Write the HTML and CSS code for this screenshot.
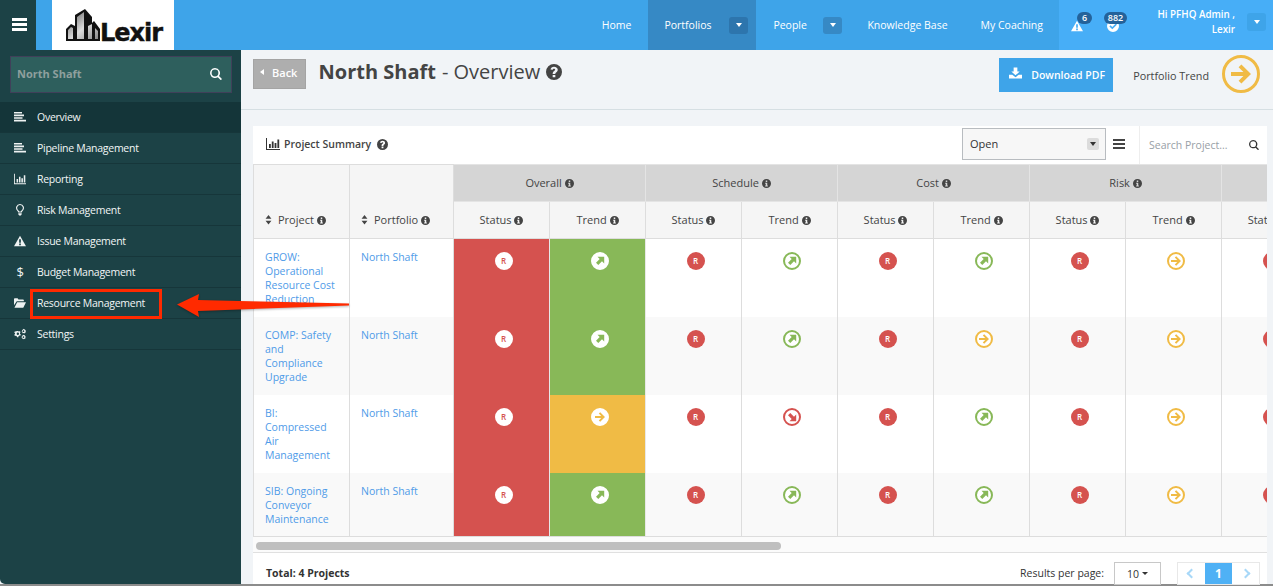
FILE: index.html
```html
<!DOCTYPE html>
<html lang="en">
<head>
<meta charset="utf-8">
<title>North Shaft - Overview</title>
<link rel="stylesheet" href="styles.css">
</head>
<body>
<svg class="defs" width="0" height="0" aria-hidden="true">
  <symbol id="i-info" viewBox="0 0 12 12"><path fill-rule="evenodd" d="M6 0a6 6 0 1 1 0 12A6 6 0 0 1 6 0zM5 2v2h2V2zM4.2 5v1.2H5v2.6h-.8V10h3.6V8.8H7V5z"/></symbol>
  <symbol id="i-q" viewBox="0 0 12 12"><path fill-rule="evenodd" d="M6 0a6 6 0 1 1 0 12A6 6 0 0 1 6 0zM5 8.300v1.700h2V8.300zM6 2C4.600 2 3.600 2.800 3.400 4.100l1.600.3c.1-.6.4-.9 1-.9.5 0 .9.3.9.7 0 .4-.3.6-.8 1C5.400 5.700 5 6.200 5 7.500h2c0-.7.200-1 .8-1.400.7-.5 1-1.100 1-1.800C8.800 3 7.600 2 6 2z"/></symbol>
  <symbol id="i-check" viewBox="0 0 12 12"><path fill-rule="evenodd" d="M6 0a6 6 0 1 1 0 12A6 6 0 0 1 6 0zM8.800 3.600L5.300 7.100 3.500 5.300 2.400 6.400l2.900 2.900 4.600-4.600z"/></symbol>
  <symbol id="i-ne" viewBox="0 0 12 12"><path d="M3.500 1.800h6.700v6.700L8 6.300l-3.700 3.700-2.300-2.300L5.700 4z"/></symbol>
  <symbol id="i-e" viewBox="0 0 12 12"><path d="M6.200 1.200L11 6l-4.800 4.800-1.400-1.400 2.400-2.400H1V5h6.200L4.800 2.600z"/></symbol>
  <symbol id="i-se" viewBox="0 0 12 12"><path d="M3.500 10.200h6.700V3.500L8 5.700 4.300 2 2 4.300 5.700 8z"/></symbol>
  <symbol id="i-lines" viewBox="0 0 12 12"><path d="M0 1h8v1.600H0zM0 3.600h10v1.600H0zM0 6.200h8.500v1.600H0zM0 8.800h12v1.600H0z"/></symbol>
  <symbol id="i-bars" viewBox="0 0 14 12"><path d="M0 0h1v11h13v1H0zM3 6h1.800v4H3zM5.800 3.500h1.800V10H5.800zM8.600 5h1.800v5H8.600zM11.400 1.500h1.800V10h-1.800z"/></symbol>
  <symbol id="i-bulb" viewBox="0 0 10 14"><path fill-rule="evenodd" d="M5 0a4.600 4.600 0 0 1 3 8.100c-.6.600-.8 1.100-.9 1.900H2.900c-.1-.8-.3-1.300-.9-1.900A4.600 4.600 0 0 1 5 0zm0 1.300A3.300 3.300 0 0 0 3 7.200c.6.600 1 1.100 1.100 1.600h1.800c.1-.5.500-1 1.100-1.600A3.300 3.300 0 0 0 5 1.300zM3 10.700h4V12l-1 1.500H4L3 12z"/></symbol>
  <symbol id="i-warn" viewBox="0 0 14 12"><path fill-rule="evenodd" d="M7 0l7 12H0zM6 4v4h2V4zM6 9v2h2V9z"/></symbol>
  <symbol id="i-folder" viewBox="0 0 14 11"><path d="M0 1.200C0 .5.500 0 1.200 0h3l1 1.300h5.300c.6 0 1 .4 1 1V3.500H3.200L0 8zM3.700 4.500H14L10.800 11H.5z"/></symbol>
  <symbol id="i-gears" viewBox="0 0 14 12"><path fill-rule="evenodd" d="M4.500 2.500l1.400.5 1-.4.700 1.400-.7.800.2 1.200.9.600-.7 1.500-1.100-.3-1 .8-.1 1.100H3.500l-.3-1.100-1-.6-1.100.4L.3 6.800l.9-.8V5L.3 4.200l.8-1.400 1.100.3 1-.6zM4.500 4.300a1.400 1.400 0 1 0 0 2.800 1.400 1.400 0 0 0 0-2.800zM11 0l.8.700 1-.1.300 1 .9.600-.4 1 .1 1-1 .4-.7.800-.9-.5-1 .1-.4-1-.8-.7.500-.9-.1-1 1-.3zM11 1.700a1 1 0 1 0 0 2 1 1 0 0 0 0-2zM11 7l.8.600 1 0 .2 1 .8.700-.5.900 0 1-1 .2-.7.700-.9-.5-1 0-.2-1-.8-.7.500-.9 0-1 1-.2zM11 8.600a1 1 0 1 0 0 2 1 1 0 0 0 0-2z"/></symbol>
  <symbol id="i-search" viewBox="0 0 12 12"><path fill-rule="evenodd" d="M5 0a5 5 0 0 1 4 8l3 3-1.200 1.200-3-3A5 5 0 1 1 5 0zm0 1.600a3.400 3.400 0 1 0 0 6.800 3.400 3.400 0 0 0 0-6.800z"/></symbol>
  <symbol id="i-sort" viewBox="0 0 8 12"><path d="M4 0l3.500 4.500h-7zM.5 7h7L4 11.500z"/></symbol>
  <symbol id="i-download" viewBox="0 0 14 12"><path d="M5 0h4v4.500h2.500L7 8.500 2.500 4.500H5zM0 8h3.500L7 10.500 10.500 8H14v4H0z"/></symbol>
</svg>

<header class="topbar">
  <button class="burger" type="button" aria-label="Menu"><span></span><span></span><span></span></button>
  <div class="logo">
    <svg class="logo-mark" viewBox="0 0 34 32" aria-hidden="true">
      <defs>
        <linearGradient id="logo-a" x1="0" y1="0" x2="1" y2="1"><stop offset="0" stop-color="#555"/><stop offset=".55" stop-color="#ddd"/><stop offset="1" stop-color="#888"/></linearGradient>
      </defs>
      <path fill="#111" d="M0 32V20l5-5 4 2V6L19 0l7 8v6l2-2 6 8v12z"/>
      <path fill="url(#logo-a)" d="M11 8l7-5v27h-7zM2 21l3-3 2 1v11H2zM22 17l4-2v15h-4zM29 19l3 3v8h-3z"/>
      <path fill="#111" d="M8 20h2v12H8zM20 14h2v18h-2z"/>
    </svg>
    <span class="logo-text">Lexir</span>
  </div>
  <nav class="nav">
    <a class="nav-item">Home</a>
    <a class="nav-item is-active">Portfolios<span class="caret-btn"><i class="caret"></i></span></a>
    <a class="nav-item">People<span class="caret-btn"><i class="caret"></i></span></a>
    <a class="nav-item">Knowledge Base</a>
    <a class="nav-item">My Coaching</a>
  </nav>
  <div class="account">
    <span class="alert alert-one"><svg class="alert-icon"><use href="#i-warn"/></svg><b class="badge">6</b></span>
    <span class="alert alert-two"><svg class="alert-icon"><use href="#i-check"/></svg><b class="badge">882</b></span>
    <span class="hello">Hi PFHQ Admin ,<br>Lexir</span>
    <span class="caret-btn user-caret"><i class="caret"></i></span>
  </div>
</header>

<div class="shell">
  <aside class="sidebar">
    <div class="side-search">
      <div class="side-box"><span>North Shaft</span><svg class="side-search-icon"><use href="#i-search"/></svg></div>
    </div>
    <ul class="side-menu">
      <li class="is-current"><svg class="si"><use href="#i-lines"/></svg>Overview</li>
      <li><svg class="si"><use href="#i-lines"/></svg>Pipeline Management</li>
      <li><svg class="si"><use href="#i-bars"/></svg>Reporting</li>
      <li><svg class="si"><use href="#i-bulb"/></svg>Risk Management</li>
      <li><svg class="si"><use href="#i-warn"/></svg>Issue Management</li>
      <li><span class="si dollar">$</span>Budget Management</li>
      <li><svg class="si"><use href="#i-folder"/></svg>Resource Management</li>
      <li><svg class="si"><use href="#i-gears"/></svg>Settings</li>
    </ul>
  </aside>

  <main class="content">
    <div class="page-head">
      <a class="back"><i class="back-caret"></i>Back</a>
      <h1 class="title"><b>North Shaft</b> - Overview <svg class="title-q"><use href="#i-q"/></svg></h1>
      <a class="download"><svg class="dl-icon"><use href="#i-download"/></svg>Download PDF</a>
      <span class="trend-label">Portfolio Trend</span>
      <span class="trend-big"><svg><use href="#i-e"/></svg></span>
    </div>

    <section class="card">
      <div class="card-head">
        <svg class="ch-bars"><use href="#i-bars"/></svg>
        <span class="ch-title">Project Summary</span>
        <svg class="ch-q"><use href="#i-q"/></svg>
        <div class="select"><span>Open</span><i class="select-btn"><i class="caret dark"></i></i></div>
        <div class="menu-lines"><span></span><span></span><span></span></div>
        <div class="card-search"><span>Search Project...</span><svg><use href="#i-search"/></svg></div>
      </div>

      <div class="table-clip">
        <table class="grid">
          <colgroup><col class="c-project"><col class="c-portfolio"><col span="10" class="c-n"></colgroup>
          <thead>
            <tr class="r-group">
              <th rowspan="2" class="th-left"><svg class="sort"><use href="#i-sort"/></svg>Project <svg class="inf"><use href="#i-info"/></svg></th>
              <th rowspan="2" class="th-left"><svg class="sort"><use href="#i-sort"/></svg>Portfolio <svg class="inf"><use href="#i-info"/></svg></th>
              <th colspan="2" class="grp">Overall <svg class="inf"><use href="#i-info"/></svg></th>
              <th colspan="2" class="grp">Schedule <svg class="inf"><use href="#i-info"/></svg></th>
              <th colspan="2" class="grp">Cost <svg class="inf"><use href="#i-info"/></svg></th>
              <th colspan="2" class="grp">Risk <svg class="inf"><use href="#i-info"/></svg></th>
              <th colspan="2" class="grp"></th>
            </tr>
            <tr class="r-sub">
              <th>Status <svg class="inf"><use href="#i-info"/></svg></th><th>Trend <svg class="inf"><use href="#i-info"/></svg></th>
              <th>Status <svg class="inf"><use href="#i-info"/></svg></th><th>Trend <svg class="inf"><use href="#i-info"/></svg></th>
              <th>Status <svg class="inf"><use href="#i-info"/></svg></th><th>Trend <svg class="inf"><use href="#i-info"/></svg></th>
              <th>Status <svg class="inf"><use href="#i-info"/></svg></th><th>Trend <svg class="inf"><use href="#i-info"/></svg></th>
              <th>Status <svg class="inf"><use href="#i-info"/></svg></th><th></th>
            </tr>
          </thead>
          <tbody>
            <tr class="h78">
              <td class="txt"><a>GROW: Operational Resource Cost Reduction</a></td><td class="txt"><a>North Shaft</a></td>
              <td class="fill-red"><span class="st inv">R</span></td><td class="fill-green"><span class="tr inv"><svg><use href="#i-ne"/></svg></span></td>
              <td><span class="st">R</span></td><td><span class="tr green"><svg><use href="#i-ne"/></svg></span></td>
              <td><span class="st">R</span></td><td><span class="tr green"><svg><use href="#i-ne"/></svg></span></td>
              <td><span class="st">R</span></td><td><span class="tr amber"><svg><use href="#i-e"/></svg></span></td>
              <td><span class="st"></span></td><td></td>
            </tr>
            <tr class="h78">
              <td class="txt"><a>COMP: Safety and Compliance Upgrade</a></td><td class="txt"><a>North Shaft</a></td>
              <td class="fill-red"><span class="st inv">R</span></td><td class="fill-green"><span class="tr inv"><svg><use href="#i-ne"/></svg></span></td>
              <td><span class="st">R</span></td><td><span class="tr green"><svg><use href="#i-ne"/></svg></span></td>
              <td><span class="st">R</span></td><td><span class="tr amber"><svg><use href="#i-e"/></svg></span></td>
              <td><span class="st">R</span></td><td><span class="tr amber"><svg><use href="#i-e"/></svg></span></td>
              <td><span class="st"></span></td><td></td>
            </tr>
            <tr class="h78">
              <td class="txt"><a>BI: Compressed Air Management</a></td><td class="txt"><a>North Shaft</a></td>
              <td class="fill-red"><span class="st inv">R</span></td><td class="fill-amber"><span class="tr inv"><svg><use href="#i-e"/></svg></span></td>
              <td><span class="st">R</span></td><td><span class="tr red"><svg><use href="#i-se"/></svg></span></td>
              <td><span class="st">R</span></td><td><span class="tr green"><svg><use href="#i-ne"/></svg></span></td>
              <td><span class="st">R</span></td><td><span class="tr amber"><svg><use href="#i-e"/></svg></span></td>
              <td><span class="st"></span></td><td></td>
            </tr>
            <tr class="h64">
              <td class="txt"><a>SIB: Ongoing Conveyor Maintenance</a></td><td class="txt"><a>North Shaft</a></td>
              <td class="fill-red"><span class="st inv">R</span></td><td class="fill-green"><span class="tr inv"><svg><use href="#i-ne"/></svg></span></td>
              <td><span class="st">R</span></td><td><span class="tr green"><svg><use href="#i-ne"/></svg></span></td>
              <td><span class="st">R</span></td><td><span class="tr green"><svg><use href="#i-ne"/></svg></span></td>
              <td><span class="st">R</span></td><td><span class="tr amber"><svg><use href="#i-e"/></svg></span></td>
              <td><span class="st"></span></td><td></td>
            </tr>
          </tbody>
        </table>
      </div>

      <div class="scrollbar"><div class="thumb"></div></div>

      <div class="card-foot">
        <b class="total">Total: 4 Projects</b>
        <span class="rpp">Results per page:</span>
        <span class="rpp-select">10<i class="caret dark small"></i></span>
        <div class="pager">
          <span class="pg"><i class="chev left"></i></span>
          <span class="pg on">1</span>
          <span class="pg"><i class="chev right"></i></span>
        </div>
      </div>
    </section>
  </main>
</div>
<div class="strip"></div>

<div class="callout-box"></div>
<svg class="callout-arrow" width="180" height="30" viewBox="0 0 180 30" aria-hidden="true"><path d="M0 14.500L22 4l-1 6 151 3.500v2L21 21l1 6z"/></svg>
</body>
</html>
```
FILE: styles.css
```css
* { box-sizing: border-box; }
html, body { margin: 0; height: 586px; overflow: hidden; }
body { background: #f1f4f7; font-family: "Open Sans", "Liberation Sans", sans-serif; font-size: 10.500px; color: #333; position: relative; }
.defs { position: absolute; }
a { color: inherit; text-decoration: none; }

/* top bar */
.topbar { display: flex; height: 50px; background: #3ea4e9; color: #fff; }
.burger { width: 36px; height: 50px; padding: 18px 9px 0 12px; border: 0; background: #1c4246; display: flex; flex-direction: column; gap: 2px; }
.burger span { display: block; height: 3px; width: 15px; background: #fff; }
.logo { width: 122px; margin-left: 16px; background: #fff; display: flex; align-items: center; padding: 0 0 0 14px; color: #111; }
.logo-mark { width: 34px; height: 32px; flex: none; }
.logo-text { font-family: "DejaVu Sans", sans-serif; font-weight: 700; font-size: 24px; letter-spacing: -1px; line-height: 24px; margin-top: 15px; -webkit-text-stroke: .4px #111; }
.nav { margin-left: auto; display: flex; align-items: stretch; }
.nav-item { display: flex; align-items: center; padding: 0 17px 0 12px; }
.nav-item:nth-child(2) { width: 108px; padding: 0 8px 0 16px; justify-content: space-between; background: #3689c5; }
.nav-item:nth-child(3) { width: 94px; padding: 0 8px 0 17px; justify-content: space-between; }
.nav-item:nth-child(4) { padding: 0 16px 0 17px; }
.nav-item:nth-child(5) { padding: 0 16px 0 17px; }
.caret-btn { width: 19px; height: 17px; border-radius: 3px; background: #3689c5; display: flex; align-items: center; justify-content: center; }
.nav-item:nth-child(2) .caret-btn { background: #2d75ad; }
.caret { display: block; width: 0; height: 0; border: 3.500px solid transparent; border-top: 4px solid #fff; border-bottom: 0; }
.caret.dark { border-top-color: #333; }
.account { width: 214px; background: #47aef7; display: flex; align-items: center; position: relative; padding: 0 7px 0 0; }
.alert { position: relative; display: block; width: 12px; height: 12px; }
.alert-icon { width: 12px; height: 12px; fill: #fff; display: block; }
.alert-one { margin-left: 12px; margin-top: 1px; }
.alert-two { margin-left: 24px; margin-top: 1px; }
.badge { position: absolute; font-size: 9px; font-weight: 600; color: #fff; background: #24629a; border-radius: 6px; height: 12px; line-height: 12px; min-width: 15px; padding: 0 2px; top: -8px; left: 6px; text-align: center; }
.alert-two .badge { left: -3px; min-width: 23px; }
.hello { flex: 1; text-align: right; font-weight: 600; line-height: 15px; padding-right: 12px; font-size: 9.800px; margin-top: -7px; }
.user-caret { height: 18px; margin-top: -6px; background: #3ea4e9; }

/* shell */
.shell { display: flex; height: 534px; }
.sidebar { width: 241px; flex: none; background: #1c4246; border-bottom-left-radius: 5px; color: #fff; }
.side-search { height: 52px; padding: 6px 9px 0 10px; }
.side-box { height: 37px; background: #2e5f5d; border: 1px solid #40405a; display: flex; align-items: center; justify-content: space-between; padding: 0 9px 2px 6px; color: #8fa09e; font-weight: 700; font-size: 11px; }
.side-search-icon { width: 12px; height: 12px; fill: #fff; }
.side-menu { margin: 0; padding: 0; list-style: none; }
.side-menu li { height: 31px; display: flex; align-items: center; padding: 0 0 0 14px; border-bottom: 1px solid #16363a; color: #f2f6f6; letter-spacing: -.26px; }
.side-menu li.is-current { background: #143539; }
.si { width: 12px; height: 12px; margin-right: 11px; fill: #eef2f2; flex: none; text-align: center; }
.dollar { font-size: 13px; line-height: 12px; }

/* content */
.content { flex: 1; min-width: 0; display: flex; flex-direction: column; }
.page-head { height: 60px; border-bottom: 1px solid #d6dfe3; flex: none; padding-left: 12px; padding-right: 13px; display: flex; align-items: flex-start; }
.back { width: 53px; height: 30px; margin-top: 9px; padding: 0 0 4px 6px; background: #aeaeae; border: 1px solid #a4a4a4; color: #fff; font-weight: 600; display: flex; align-items: center; gap: 8px; font-size: 11px; }
.back-caret { width: 0; height: 0; border: 3.500px solid transparent; border-right: 4px solid #fff; border-left: 0; }
.title { margin: 7px 0 0 12.500px; font-size: 20px; font-weight: 400; line-height: 30px; color: #444; white-space: nowrap; display: flex; align-items: center; gap: 6px; }
.title b { font-weight: 700; }
.title-q { width: 16px; height: 16px; fill: #444; }
.download { margin: 8px 0 0 auto; width: 114px; height: 34px; padding: 0 0 1px 10px; background: #3ea4e9; color: #fff; display: flex; align-items: center; gap: 9px; font-weight: 600; }
.dl-icon { width: 13px; height: 12px; fill: #fff; margin-top: -3px; }
.trend-label { margin: 18px 0 0 20px; font-size: 10.800px; font-weight: 500; color: #444; }
.trend-big { margin: 5px 0 0 13px; width: 38px; height: 38px; border: 3px solid #f0bb45; border-radius: 50%; display: flex; align-items: center; justify-content: center; }
.trend-big svg { width: 24px; height: 24px; fill: #f0bb45; }

.card { margin: 16px 6px 0 12px; background: #fff; flex: 1; min-height: 0; display: flex; flex-direction: column; min-width: 0; }
.card-head { height: 38px; flex: none; display: flex; align-items: center; padding: 0 0 2px 13px; }
.ch-bars { width: 14px; height: 12px; fill: #333; }
.ch-title { margin-left: 4px; font-weight: 600; color: #444; }
.ch-q { width: 11px; height: 11px; fill: #444; margin-left: 6px; }
.select { margin-left: auto; width: 144px; height: 32px; background: #f7f7f7; border: 1px solid #b8bcc0; display: flex; align-items: center; justify-content: space-between; padding: 0 6px 1px 7px; color: #333; font-size: 11px; }
.select-btn { width: 12px; height: 12px; background: #dcdcdc; border-radius: 2px; display: flex; align-items: center; justify-content: center; }
.menu-lines { margin: 0 0 0 7px; width: 12px; display: flex; flex-direction: column; gap: 2px; }
.menu-lines span { display: block; height: 2px; background: #444; }
.card-search { margin-left: 14px; width: 128px; height: 38px; margin-bottom: -2px; border-left: 1px solid #eee; display: flex; align-items: center; justify-content: space-between; padding: 0 8px 0 9px; color: #98a0a6; }
.card-search svg { width: 10px; height: 10px; fill: #333; }

.table-clip { overflow: hidden; flex: none; }
.grid { table-layout: fixed; border-collapse: collapse; width: 1160px; }
.c-project { width: 96px; }
.c-portfolio { width: 104px; }
.c-n { width: 96px; }
.grid th, .grid td { border: 1px solid #ddd; padding: 0; font-weight: 600; }
.grid thead th { background: #f5f5f5; color: #444; text-align: center; vertical-align: middle; font-size: 11px; font-weight: 500; white-space: nowrap; padding-bottom: 2px; }
.r-group, .r-sub { height: 37px; }
.grid .grp { background: #d5d5d5; border-color: #e4e4e4; }
.grid .th-left { text-align: left; padding: 36px 0 0 11px; }
.inf { width: 9px; height: 9px; fill: #444; vertical-align: -1px; }
.sort { width: 7px; height: 10px; fill: #444; margin-right: 6px; vertical-align: -1px; }
.h78 { height: 78px; }
.h64 { height: 64px; }
.grid tbody td { border-top: 0; border-bottom: 0; }
.grid tbody tr:last-child td { border-bottom: 1px solid #ddd; }
.grid tbody tr:nth-child(even) td { background: #f9f9f9; }
.grid td { vertical-align: top; text-align: center; padding: 13px 0 0 4px; line-height: 14px; }
.grid td.txt { text-align: left; padding: 11px 14px 0 11px; font-weight: 400; color: #4f9be8; }
.grid tbody tr td.fill-red { background: #d5524f; border-left-color: #e8e8e8; border-right-color: #e8e8e8; }
.grid tbody tr td.fill-green { background: #88b858; border-left-color: #e8e8e8; border-right-color: #e8e8e8; }
.grid tbody tr td.fill-amber { background: #f0bb45; border-left-color: #e8e8e8; border-right-color: #e8e8e8; }
.st { display: inline-flex; width: 18px; height: 18px; border-radius: 50%; background: #d5524f; color: #fff; font-size: 8px; font-weight: 600; align-items: center; justify-content: center; }
.st.inv { background: #fff; color: #d5524f; }
.tr { display: inline-flex; width: 18px; height: 18px; border-radius: 50%; border: 2px solid currentColor; background: #fff; align-items: center; justify-content: center; }
.tr svg { width: 12px; height: 12px; fill: currentColor; }
.tr.green { color: #88b858; }
.tr.amber { color: #f0bb45; }
.tr.red { color: #d5524f; }
.tr.inv { border-color: #fff; }
.fill-green .tr { color: #88b858; }
.fill-amber .tr { color: #f0bb45; }

.scrollbar { height: 16px; flex: none; background: #fbfbfb; border-bottom: 1px solid #e0e0e0; padding: 5px 0 0 3px; }
.thumb { width: 525px; height: 8px; background: #bfbfbf; border-radius: 4px; }
.card-foot { flex: 1; display: flex; align-items: center; padding: 8px 0 0 13px; min-height: 0; }
.total { font-weight: 700; color: #333; }
.rpp { margin-left: auto; color: #333; }
.rpp-select { margin-left: 10px; width: 47px; height: 23px; border: 1px solid #c8c8c8; display: flex; align-items: center; justify-content: center; gap: 3px; margin-top: 2px; }
.caret.small { border-width: 3px; border-top-width: 3px; border-bottom: 0; }
.pager { margin-left: 16px; margin-right: 7px; display: flex; height: 23px; border: 1px solid #e8e8e8; margin-top: 2px; }
.pg { width: 27px; display: flex; align-items: center; justify-content: center; }
.pg.on { background: #4fb1f5; color: #fff; font-weight: 700; font-size: 12px; }
.chev { width: 7px; height: 7px; border-left: 2px solid #a8d8f8; border-bottom: 2px solid #a8d8f8; }
.chev.left { transform: rotate(45deg); }
.chev.right { transform: rotate(225deg); }

.strip { height: 2px; background: #8c8c8c; }

/* annotation laid over the page */
.callout-box { position: absolute; left: 30px; top: 289px; width: 132px; height: 30px; border: 3px solid #ff2a00; }
.callout-arrow { position: absolute; left: 177px; top: 290px; fill: #ff2a00; filter: drop-shadow(0 1px 1px rgba(0,0,0,.3)); }
```
